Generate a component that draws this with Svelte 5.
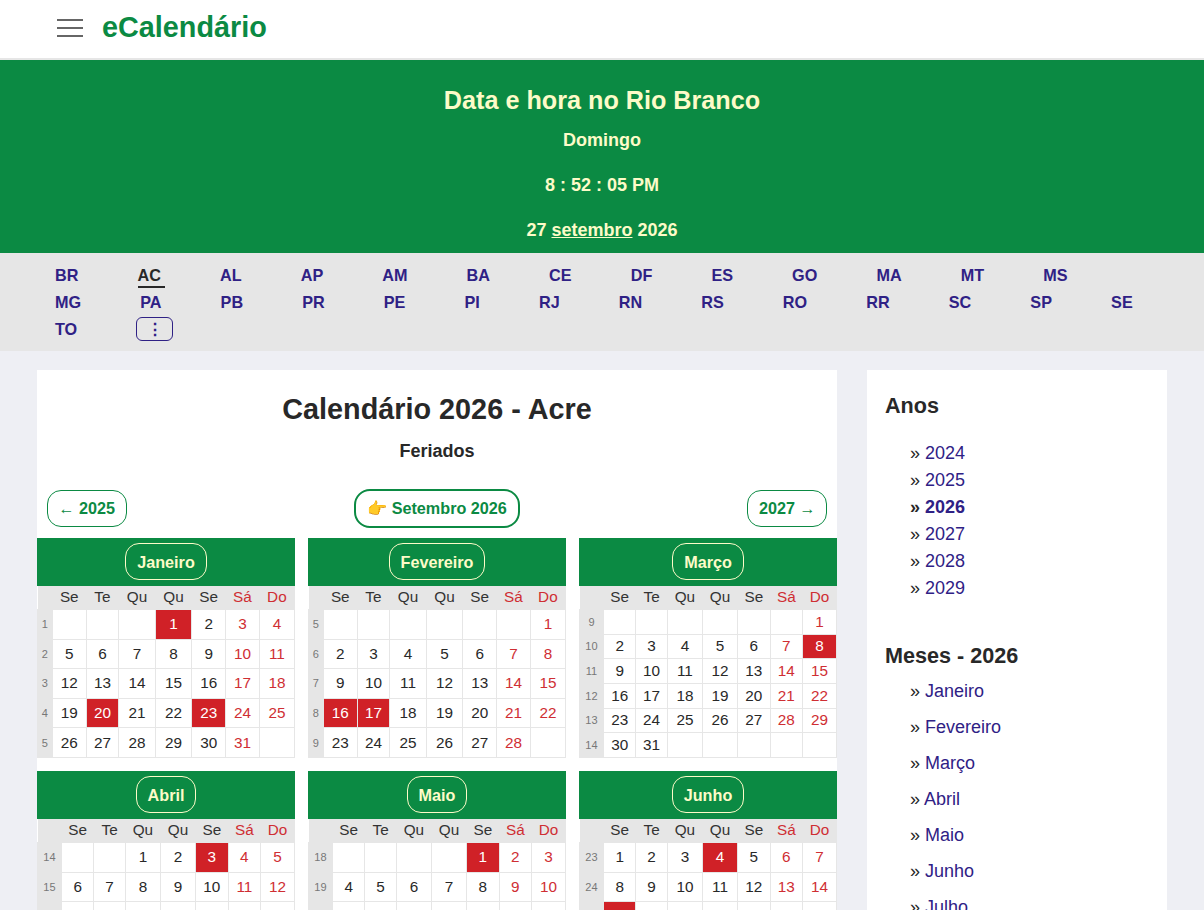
<script>
	const ufs = ['BR','AC','AL','AP','AM','BA','CE','DF','ES','GO','MA','MT','MS','MG','PA','PB','PR','PE','PI','RJ','RN','RS','RO','RR','SC','SP','SE','TO']
	const anos = [2024, 2025, 2026, 2027, 2028, 2029]
	const mesesNomes = ['Janeiro','Fevereiro','Março','Abril','Maio','Junho','Julho','Agosto','Setembro','Outubro','Novembro','Dezembro']
	const diasSemana = ['Se','Te','Qu','Qu','Se','Sá','Do']
	const feriados = { 0: [1, 20, 23], 1: [16, 17], 2: [8], 3: [3], 4: [1], 5: [4, 15] }

	// Monta as semanas do mês: [numero da semana, 7 dias ou null]
	function semanas(mes) {
		const inicio = (new Date(2026, mes, 1).getDay() + 6) % 7
		const total = new Date(2026, mes + 1, 0).getDate()
		const base = Math.round((new Date(2026, mes, 1) - new Date(2026, 0, 1)) / 86400000)
		const linhas = []
		let dias = Array(inicio).fill(null)
		for (let d = 1; d <= total; d++) {
			dias.push(d)
			if (dias.length === 7 || d === total) {
				const num = Math.floor((base + d - 1 + 3) / 7) + 1
				while (dias.length < 7) dias.push(null)
				linhas.push({ num, dias })
				dias = []
			}
		}
		return linhas
	}

	const calendarios = [0, 1, 2, 3, 4, 5].map((m) => ({ nome: mesesNomes[m], linhas: semanas(m), feriados: feriados[m] }))
</script>

<header class="topo">
	<button class="menu" aria-label="Menu"><span></span><span></span><span></span></button>
	<a class="logo" href="#top">eCalendário</a>
</header>

<section class="relogio">
	<h1>Data e hora no Rio Branco</h1>
	<p>Domingo</p>
	<p>8 : 52 : 05 PM</p>
	<p>27 <a href="#mes">setembro</a> 2026</p>
</section>

<nav class="estados">
	{#each ufs as uf}
		<a href="#uf" class:ativo={uf === 'AC'}>{uf}</a>
	{/each}
	<button class="mais" aria-label="Mais">⋮</button>
</nav>

<main class="conteudo">
	<article class="principal">
		<h2>Calendário 2026 - Acre</h2>
		<h3>Feriados</h3>
		<div class="navegacao">
			<a class="botao" href="#ano"><small>←</small> 2025</a>
			<a class="botao atual" href="#mes">👉 Setembro 2026</a>
			<a class="botao" href="#ano">2027 <small>→</small></a>
		</div>
		<div class="grade">
			{#each calendarios as cal}
				<div class="mes">
					<div class="mes-topo"><a href="#mes">{cal.nome}</a></div>
					<table>
						<thead>
							<tr>
								<th class="sem"></th>
								{#each diasSemana as d, i}
									<th class:fds={i > 4}>{d}</th>
								{/each}
							</tr>
						</thead>
						<tbody>
							{#each cal.linhas as linha}
								<tr>
									<td class="sem">{linha.num}</td>
									{#each linha.dias as d, i}
										<td class:fds={i > 4} class:feriado={cal.feriados.includes(d)}>{d ?? ''}</td>
									{/each}
								</tr>
							{/each}
						</tbody>
					</table>
				</div>
			{/each}
		</div>
	</article>

	<aside class="lateral">
		<h4>Anos</h4>
		<ul class="anos">
			{#each anos as a}
				<li class:forte={a === 2026}>» <a href="#ano">{a}</a></li>
			{/each}
		</ul>
		<h4 class="titulo-meses">Meses - 2026</h4>
		<ul class="meses">
			{#each mesesNomes as m}
				<li>» <a href="#mes">{m}</a></li>
			{/each}
		</ul>
	</aside>
</main>

<style>
	:global(body) {
		background: #eeeff4;
		font-family: "Liberation Sans", Arial, sans-serif;
		color: #282828;
		overflow: hidden;
	}
	a { text-decoration: none; color: #2f2185; }

	.topo {
		display: flex;
		align-items: center;
		gap: 19px;
		height: 55px;
		padding: 0 0 3px 57px;
		background: #fff;
		border-bottom: 2px solid #e6e6e6;
	}
	.menu {
		display: flex;
		flex-direction: column;
		gap: 6px;
		width: 26px;
		padding: 0;
		border: 0;
		background: none;
	}
	.menu span { height: 2px; background: #666; }
	.logo { font-size: 28.8px; font-weight: 700; color: #0b8a43; }

	.relogio {
		height: 193px;
		background: #0b8a43;
		color: #fdfbc8;
		text-align: center;
		font-weight: 700;
		box-sizing: border-box;
		padding-top: 25px;
	}
	.relogio h1 { margin: 0 0 15px; font-size: 25.2px; line-height: 30px; }
	.relogio p { margin: 0 0 24px; font-size: 18px; line-height: 21px; }
	.relogio a { color: inherit; text-decoration: underline; }

	.estados {
		display: flex;
		flex-wrap: wrap;
		align-items: center;
		height: 98px;
		box-sizing: border-box;
		padding: 9px 0 0 55px;
		align-content: flex-start;
		background: #e6e6e6;
	}
	.estados a {
		position: relative;
		margin-right: 59.12px;
		font-size: 16.2px;
		font-weight: 700;
		line-height: 27px;
	}
	.estados a.ativo { color: #282828; }
	.estados a.ativo::after {
		content: "";
		position: absolute;
		left: 0;
		bottom: 1px;
		width: 27px;
		height: 2px;
		background: #282828;
	}
	.mais {
		width: 37px;
		height: 24px;
		margin-top: -1px;
		padding: 0;
		border: 1px solid #2f2185;
		border-radius: 6px;
		background: none;
		color: #2f2185;
		font: 700 16px "Liberation Sans", Arial, sans-serif;
	}

	.conteudo {
		display: flex;
		align-items: flex-start;
		gap: 30px;
		padding: 19px 37px;
	}
	.principal { width: 800px; flex: none; background: #fff; }
	.principal h2 {
		margin: 0;
		padding-top: 21px;
		font-size: 28.8px;
		line-height: 36px;
		text-align: center;
	}
	.principal h3 {
		margin: 12px 0 0;
		font-size: 18px;
		line-height: 24px;
		text-align: center;
	}
	.navegacao {
		display: flex;
		justify-content: space-between;
		align-items: center;
		padding: 26px 10px 10px;
	}
	.botao {
		display: block;
		padding: 0 10.5px;
		border: 1px solid #0b8a43;
		border-radius: 14px;
		font-size: 16.2px;
		font-weight: 700;
		line-height: 35px;
		color: #0b8a43;
	}
	.botao small { font-size: 16px; font-weight: 400; }
	.botao.atual { border-width: 2px; border-radius: 16px; padding: 0 11.5px; }

	.grade {
		display: grid;
		grid-template-columns: repeat(3, 258px);
		gap: 13px;
	}
	.mes-topo {
		display: flex;
		justify-content: center;
		align-items: center;
		height: 48px;
		padding-bottom: 1px;
		box-sizing: border-box;
		background: #0b8a43;
	}
	.mes-topo a {
		padding: 2px 11px 0;
		border: 1px solid #fdfbc8;
		border-radius: 14px;
		font-size: 16.2px;
		font-weight: 700;
		line-height: 33px;
		color: #fdfbc8;
	}
	table {
		width: 100%;
		height: 172px;
		border-collapse: collapse;
		background: #fff;
		font-size: 15.3px;
	}
	th {
		height: 21px;
		padding: 0 1px 2px;
		background: #e6e6e6;
		font-weight: 400;
		color: #333;
	}
	td {
		padding: 1px;
		border: 1px solid #e6e6e6;
		text-align: center;
	}
	.sem {
		background: #e6e6e6;
		font-size: 11px;
		color: #777;
	}
	.fds { color: #cf2e33; }
	td.feriado { background: #d02127; color: #fff; }

	.lateral {
		width: 300px;
		flex: none;
		box-sizing: border-box;
		padding: 23px 18px;
		background: #fff;
	}
	h4 { margin: 0; font-size: 21.6px; line-height: 26px; }
	ul { margin: 0; padding: 0 0 0 25px; list-style: none; font-size: 18px; }
	.anos { margin-top: 21px; line-height: 27px; }
	.forte { font-weight: 700; }
	.titulo-meses { margin-top: 41px; }
	.meses { margin-top: 4px; line-height: 36px; }
</style>
